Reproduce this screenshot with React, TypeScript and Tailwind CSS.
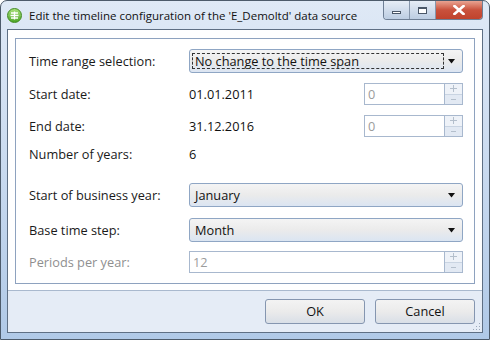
import React from "react";

const font = { fontFamily: '"Open Sans", "Noto Sans", sans-serif' };

function Dropdown({ value, focused }: { value: string; focused?: boolean }) {
  return (
    <div className="relative flex h-[24px] w-[274px] items-center rounded-[3px] border border-[#8fa6c4] bg-gradient-to-b from-[#f4f4f4] via-[#ebebeb] to-[#dbe5f2] pl-[5px]">
      {focused && (
        <div className="absolute left-[2px] top-[3px] h-[16px] w-[252px] border border-dashed border-[#333]" />
      )}
      <span className="flex-1 text-[#111]">{value}</span>
      <svg width="8" height="5" viewBox="0 0 8 5" className="mr-[6px]">
        <path d="M0 0H7L3.5 4.5Z" fill="#111" />
      </svg>
    </div>
  );
}

function SpinButtons() {
  return (
    <div className="flex w-[18px] flex-col border-l border-[#a8b8ce]">
      <div className="flex flex-1 items-center justify-center bg-[#eef2f8]">
        <svg width="7" height="7" viewBox="0 0 7 7">
          <path d="M0 3.5H7M3.5 0V7" stroke="#b4bfcc" strokeWidth="1" />
        </svg>
      </div>
      <div className="flex flex-1 items-center justify-center border-t border-[#c9d4e2] bg-[#e2e9f3]">
        <svg width="7" height="3" viewBox="0 0 7 3">
          <path d="M1 1.5H6" stroke="#b4bfcc" strokeWidth="1" />
        </svg>
      </div>
    </div>
  );
}

function Spin({ value, width }: { value: string; width: string }) {
  return (
    <div className={`flex h-[22px] ${width} border border-[#a8b8ce] bg-white`}>
      <div className="flex flex-1 items-center pl-[3px] text-[#9c9c9c]">{value}</div>
      <SpinButtons />
    </div>
  );
}

function Row({ label, children, className, disabled }: { label: string; children: React.ReactNode; className: string; disabled?: boolean }) {
  return (
    <div className={`flex items-center ${className}`}>
      <div className={`w-[160px] ${disabled ? "text-[#8f8f8f]" : "text-[#1a1a1a]"}`}>{label}</div>
      {children}
    </div>
  );
}

export default function App() {
  return (
    <div style={font} className="h-[340px] w-[490px] overflow-hidden bg-white text-[12.75px] leading-none">
      <div className="flex h-full w-full flex-col rounded-t-[7px] border border-[#4d5b6b] bg-gradient-to-b from-[#dfe9f6] via-[#c9daef] to-[#b0c9e7]">
        {/* title bar */}
        <div className="flex h-[28px] items-start">
          <div className="ml-[6px] mt-[7px] flex h-[15px] w-[15px] items-center justify-center rounded-full border border-[#3f8a1e] bg-gradient-to-b from-[#a8e07a] to-[#4ea826]">
            <svg width="9" height="9" viewBox="0 0 9 9">
              <path d="M1 2H8M0.5 4.5H8.5M1 7H8M4.5 0.5V8.5" stroke="#fff" strokeWidth="1.3" fill="none" />
            </svg>
          </div>
          <div className="ml-[7px] mt-[9px] text-[11.5px] text-[#111]">Edit the timeline configuration of the 'E_Demoltd' data source</div>
          <div className="flex-1" />
          <div className="mr-[6px] flex h-[19px] overflow-hidden rounded-b-[4px] border border-t-0 border-[#6e7f95]">
            <div className="flex w-[26px] items-end justify-center border-r border-[#8696ab] bg-gradient-to-b from-[#e6edf6] to-[#bccde2] pb-[5px]">
              <div className="h-[3px] w-[9px] border border-[#4a5768] bg-white" />
            </div>
            <div className="flex w-[26px] items-center justify-center border-r border-[#8696ab] bg-gradient-to-b from-[#e6edf6] to-[#bccde2]">
              <div className="h-[7px] w-[9px] border border-t-2 border-[#4a5768] bg-white" />
            </div>
            <div className="flex w-[46px] items-center justify-center bg-gradient-to-b from-[#e8a392] via-[#c9513c] to-[#c0432d]">
              <svg width="12" height="10" viewBox="0 0 12 10">
                <path d="M1.5 1L10.5 9M10.5 1L1.5 9" stroke="#fff" strokeWidth="2.6" strokeLinecap="square" />
              </svg>
            </div>
          </div>
        </div>

        {/* client */}
        <div className="mx-[6px] flex flex-1 flex-col border border-[#5e6f84] bg-white">
          <div className="px-[7px] pt-[8px] pb-[6px]">
            <div className="flex flex-col border border-[#8ea2bf] pl-[13px] pr-[9px]">
              <Row label="Time range selection:" className="mt-[10px] h-[24px]">
                <Dropdown value="No change to the time span" focused />
              </Row>
              <Row label="Start date:" className="mt-[10px] h-[22px]">
                <div className="w-[175px] text-[#111]">01.01.2011</div>
                <Spin value="0" width="w-[99px]" />
              </Row>
              <Row label="End date:" className="mt-[10px] h-[22px]">
                <div className="w-[175px] text-[#111]">31.12.2016</div>
                <Spin value="0" width="w-[99px]" />
              </Row>
              <Row label="Number of years:" className="mt-[7px] h-[20px]">
                <div className="text-[#111]">6</div>
              </Row>
              <Row label="Start of business year:" className="mt-[19px] h-[24px]">
                <Dropdown value="January" />
              </Row>
              <Row label="Base time step:" className="mt-[11px] h-[24px]">
                <Dropdown value="Month" />
              </Row>
              <Row label="Periods per year:" className="mb-[10px] mt-[9px] h-[22px]" disabled>
                <Spin value="12" width="w-[274px]" />
              </Row>
            </div>
          </div>
          <div className="relative flex flex-1 items-start justify-end gap-[10px] border-t border-[#a9b9ce] bg-[#e5ecf6] pr-[7px] pt-[8px]">
            <button className="h-[25px] w-[100px] rounded-[3px] border border-[#8596b0] bg-gradient-to-b from-[#f3f3f3] via-[#ebebeb] to-[#d9dfe7] text-[#111]">OK</button>
            <button className="h-[25px] w-[100px] rounded-[3px] border border-[#8596b0] bg-gradient-to-b from-[#f3f3f3] via-[#ebebeb] to-[#d9dfe7] text-[#111]">Cancel</button>
            <svg width="10" height="10" viewBox="0 0 10 10" className="absolute bottom-[1px] right-[1px]">
              {[[8, 2], [8, 5], [5, 5], [8, 8], [5, 8], [2, 8]].map(([x, y]) => (
                <rect key={`${x}-${y}`} x={x} y={y} width="1" height="1" fill="#9aa8ba" />
              ))}
            </svg>
          </div>
        </div>
        <div className="h-[6px]" />
      </div>
    </div>
  );
}
